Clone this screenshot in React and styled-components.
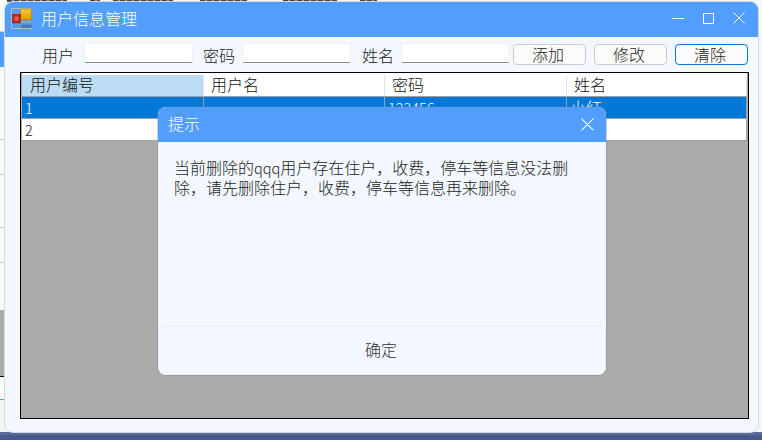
import React from 'react';
import styled, { createGlobalStyle } from 'styled-components';

const FONT = '"Noto Sans CJK SC", "DejaVu Sans", sans-serif';
const BLUE = '#519eff';
const PANEL = '#f3f8ff';
const SELECT = '#0078d7';

const GlobalStyle = createGlobalStyle`
  html, body { margin: 0; padding: 0; }
  body { font-family: ${FONT}; font-weight: 300; background: #f2f2f2; overflow: hidden; }
`;

const Desktop = styled.div`
  position: relative;
  width: 762px;
  height: 440px;
  overflow: hidden;
  background: #f4f6fa;
`;

const BackWindow = styled.div`
  position: absolute;
  left: 0;
  top: 0;
  width: 6px;
  height: 432px;
  display: flex;
  flex-direction: column;
`;

const BackCell = styled.div`
  height: ${props => props.h}px;
  flex: none;
  box-sizing: border-box;
  background: ${props => props.bg || '#fbfbfb'};
  border-bottom: 1px solid ${props => props.line || '#cfcfcf'};
`;

const BackStrip = styled.div`
  position: absolute;
  left: 0;
  top: 0;
  width: 420px;
  height: 2px;
  display: flex;
`;

const Sliver = styled.div`
  height: 2px;
  flex: none;
  width: ${props => props.w}px;
  margin-left: ${props => props.gap}px;
  background: repeating-linear-gradient(90deg, #444 0 5px, #9a9a9a 5px 7px);
`;

const TaskBar = styled.div`
  position: absolute;
  left: 0;
  right: 0;
  bottom: 0;
  height: 8px;
  background: linear-gradient(#5a6a9c 0 3px, #47598c 3px);
`;

const Window = styled.div`
  position: absolute;
  left: 5px;
  top: 2px;
  width: 753px;
  height: 430px;
  border-radius: 8px;
  overflow: hidden;
  background: ${PANEL};
  display: flex;
  flex-direction: column;
  box-shadow: 0 0 0 1px #d5d8de;
`;

const TitleBar = styled.div`
  height: 35px;
  flex: none;
  box-sizing: border-box;
  padding: 0 0 3px 6px;
  background: ${BLUE};
  display: flex;
  align-items: center;
  color: #fff;
`;

const TitleText = styled.span`
  margin: 0 0 1px 8px;
  font-size: 16px;
  line-height: 22px;
`;

const Controls = styled.div`
  margin-left: auto;
  display: flex;
  align-items: center;
  gap: 19px;
  padding-right: 13px;
`;

const Form = styled.div`
  height: 35px;
  flex: none;
  box-sizing: border-box;
  padding: 6px 0 0 37px;
  display: flex;
  align-items: flex-start;
`;

const FieldLabel = styled.label`
  font-size: 16px;
  line-height: 24px;
  color: #222;
  width: ${props => props.w}px;
  flex: none;
`;

const Input = styled.div`
  width: 109px;
  height: 20px;
  flex: none;
  box-sizing: border-box;
  background: #fff;
  border: 1px solid #f0f0f0;
  border-bottom: 1px solid #8c8c8c;
  border-radius: 2px;
  margin-right: ${props => props.gap}px;
`;

const Button = styled.button`
  width: 73px;
  height: 21px;
  flex: none;
  box-sizing: border-box;
  margin: 1px 8px 0 0;
  padding: 0 3px 0 0;
  font-family: ${FONT};
  font-weight: 300;
  font-size: 16px;
  line-height: 19px;
  color: #222;
  background: #fbfbfb;
  border: 1px solid ${props => (props.$focused ? SELECT : '#cccccc')};
  border-radius: 4px;
`;

const GridBox = styled.div`
  flex: 1;
  margin: 0 9px 13px 15px;
  background: #ababab;
  border: 1px solid #000;
  padding: 0 1px;
  display: flex;
  flex-direction: column;
  overflow: hidden;
`;

const Row = styled.div`
  display: grid;
  grid-template-columns: 182px 181px 182px 1fr;
  height: ${props => (props.$header ? 24 : 22)}px;
  flex: none;
  box-sizing: border-box;
  border-top: ${props => (props.$header ? '2px solid #fff' : 'none')};
  border-bottom: 1px solid #a0a0a0;
  background: ${props => (props.$selected ? SELECT : '#fff')};
  color: ${props => (props.$selected ? '#fff' : '#222')};
`;

const Cell = styled.div`
  box-sizing: border-box;
  padding-left: ${props => (props.$header ? (props.$first ? 8 : 7) : 3)}px;
  border-right: 1px solid ${props => (props.$header ? '#e3e3e3' : '#a0a0a0')};
  font-size: 16px;
  line-height: ${props => (props.$header ? 19 : 20)}px;
  color: ${props => (props.$header ? '#111' : 'inherit')};
  background: ${props => (props.$active ? '#bcdcf4' : 'transparent')};
  white-space: nowrap;
`;

const Latin = styled.span`
  font-size: 14.5px;
  line-height: 1;
`;

const Dialog = styled.div`
  position: absolute;
  left: 158px;
  top: 107px;
  width: 448px;
  height: 268px;
  border-radius: 8px;
  overflow: hidden;
  background: ${PANEL};
  box-shadow: 0 0 0 1px rgba(120, 125, 135, 0.35);
  display: flex;
  flex-direction: column;
`;

const DialogHeader = styled.div`
  height: 35px;
  flex: none;
  box-sizing: border-box;
  padding: 0 12px 3px 10px;
  background: ${BLUE};
  color: #fff;
  display: flex;
  align-items: center;
  justify-content: space-between;
  font-size: 16px;
`;

const CloseSlot = styled.span`
  display: flex;
  margin-top: 3px;
`;

const DialogBody = styled.div`
  flex: 1;
  padding: 15px 16px 0 16px;
  font-size: 16px;
  line-height: 20px;
  color: #222;
`;

const DialogFooter = styled.div`
  height: 49px;
  flex: none;
  box-sizing: border-box;
  padding: 0 2px 3px 0;
  border: 1px solid #e4edfb;
  border-radius: 6px;
  display: flex;
  align-items: center;
  justify-content: center;
  font-size: 16px;
  color: #333;
`;

const AppIcon = () => (
  <svg width="22" height="21" viewBox="0 0 22 21">
    <defs>
      <linearGradient id="gold" x1="0" y1="0" x2="0" y2="1">
        <stop offset="0" stopColor="#f6c93a" />
        <stop offset="1" stopColor="#dd9a00" />
      </linearGradient>
      <linearGradient id="sky" x1="0" y1="0" x2="0" y2="1">
        <stop offset="0" stopColor="#8db4ef" />
        <stop offset="1" stopColor="#2f62c8" />
      </linearGradient>
      <radialGradient id="ruby">
        <stop offset="0" stopColor="#ea6a5c" />
        <stop offset="1" stopColor="#b81d14" />
      </radialGradient>
    </defs>
    <path d="M0.5 0.5 H21 M0.5 0.5 V20.5 H21 M0.5 5.5 H9 M9.5 15 V20" stroke="#b9b9b9" fill="none" />
    <rect x="9.5" y="1" width="11" height="11" fill="url(#gold)" stroke="#a87a00" strokeWidth="0.5" />
    <rect x="9.5" y="13" width="11" height="6.5" fill="url(#sky)" />
    <rect x="1.5" y="6" width="8" height="9" fill="url(#ruby)" stroke="#7d1710" strokeWidth="0.5" />
  </svg>
);

const Close = ({ size = 12 }) => (
  <svg width={size} height={size} viewBox="0 0 12 12">
    <path d="M0.5 0.5 L11.5 11.5 M11.5 0.5 L0.5 11.5" stroke="#fff" strokeWidth="1" fill="none" />
  </svg>
);

const Minimize = () => (
  <svg width="12" height="12" viewBox="0 0 12 12">
    <path d="M0 6.5 H12" stroke="#fff" strokeWidth="1" />
  </svg>
);

const Maximize = () => (
  <svg width="11" height="11" viewBox="0 0 11 11">
    <rect x="0.5" y="0.5" width="10" height="10" stroke="#fff" strokeWidth="1" fill="none" />
  </svg>
);

const columns = ['用户编号', '用户名', '密码', '姓名'];
const rows = [
  { id: '1', name: '', pass: '123456', real: '小红', selected: true },
  { id: '2', name: '', pass: '', real: '' },
];
const slivers = [[60, 7], [10, 23], [60, 13], [47, 27], [54, 36], [17, 23]];

const App = () => (
  <Desktop>
    <GlobalStyle />
    <BackStrip>
      {slivers.map(([w, gap]) => (
        <Sliver key={`${w}-${gap}`} w={w} gap={gap} />
      ))}
    </BackStrip>
    <BackWindow>
      <BackCell h={32} />
      <BackCell h={35} bg={BLUE} line={BLUE} />
      <BackCell h={73} />
      <BackCell h={35} />
      <BackCell h={53} />
      <BackCell h={35} />
      <BackCell h={47} line="#fbfbfb" />
      <BackCell h={67} bg="#ababab" line="#000" />
      <BackCell h={23} bg="#fff" line="#4d9bf0" />
      <BackCell h={32} bg="#f5f5f5" line="#f5f5f5" />
    </BackWindow>
    <TaskBar />
    <Window>
      <TitleBar>
        <AppIcon />
        <TitleText>用户信息管理</TitleText>
        <Controls>
          <Minimize />
          <Maximize />
          <Close />
        </Controls>
      </TitleBar>
      <Form>
        <FieldLabel w={42}>用户</FieldLabel>
        <Input gap={10} />
        <FieldLabel w={39}>密码</FieldLabel>
        <Input gap={11} />
        <FieldLabel w={39}>姓名</FieldLabel>
        <Input gap={3} />
        <Button>添加</Button>
        <Button>修改</Button>
        <Button $focused>清除</Button>
      </Form>
      <GridBox>
        <Row $header>
          {columns.map((c, i) => (
            <Cell key={c} $header $first={i === 0} $active={i === 0}>{c}</Cell>
          ))}
        </Row>
        {rows.map(r => (
          <Row key={r.id} $selected={r.selected}>
            <Cell><Latin>{r.id}</Latin></Cell>
            <Cell>{r.name}</Cell>
            <Cell><Latin>{r.pass}</Latin></Cell>
            <Cell>{r.real}</Cell>
          </Row>
        ))}
      </GridBox>
    </Window>
    <Dialog>
      <DialogHeader>
        提示
        <CloseSlot><Close size={13} /></CloseSlot>
      </DialogHeader>
      <DialogBody>
        当前删除的<Latin>qqq</Latin>用户存在住户，收费，停车等信息没法删除，请先删除住户，收费，停车等信息再来删除。
      </DialogBody>
      <DialogFooter>确定</DialogFooter>
    </Dialog>
  </Desktop>
);

export default App;
